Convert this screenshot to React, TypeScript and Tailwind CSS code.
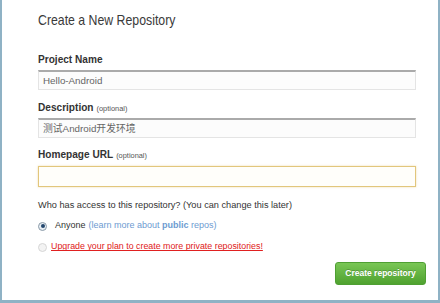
import React from 'react';

const sans = { fontFamily: '"Liberation Sans", Arial, "Noto Sans CJK SC", sans-serif' };

const Field = ({ label, optional, value, focused, top }: { label: string; optional?: boolean; value?: string; focused?: boolean; top: string }) => (
    <div className={top}>
        <div className="h-[14px] leading-[14px] text-[10.1px] font-bold text-[#333]">
            {label}
            {optional && <span className="ml-[3px] text-[7.4px] font-normal text-[#555]">(optional)</span>}
        </div>
        <div
            className={
                focused
                    ? 'mt-[4px] h-[21px] w-[378px] border-[1.5px] border-[#e2c67c] bg-[#fffefa] shadow-[0_0_2px_rgba(226,198,124,0.6)]'
                    : 'mt-[3px] h-[20px] w-[378px] border border-[#e4e4e4] border-t-2 border-t-[#aaaaaa] bg-[#fcfcfc]'
            }
        >
            {value && <div className="pl-[4px] leading-[17px] text-[9.8px] text-[#666]">{value}</div>}
        </div>
    </div>
);

export default function App() {
    return (
        <div style={sans} className="w-[440px] h-[303px] bg-white border-l-2 border-r-2 border-b-[3px] border-[#8fb2c5] overflow-hidden">
            <div className="pl-[36px]">
                <div className="pt-[10px] h-[30px] leading-[20px]">
                    <span className="inline-block origin-left scale-x-[0.82] text-[15px] text-[#3a3a3a] whitespace-nowrap">
                        Create a New Repository
                    </span>
                </div>

                <Field top="mt-[23px]" label="Project Name" value="Hello-Android" />
                <Field top="mt-[11px]" label="Description" optional value="测试Android开发环境" />
                <Field top="mt-[10px]" label="Homepage URL" optional focused />

                <div className="mt-[12px] h-[12px] leading-[12px] text-[9.2px] text-[#333] whitespace-nowrap">
                    Who has access to this repository? (You can change this later)
                </div>

                <div className="mt-[9px] h-[12px] flex items-center text-[9px] whitespace-nowrap">
                    <div className="w-[9px] h-[9px] rounded-full border border-[#8a9aa8] bg-[#e8eef3] flex items-center justify-center">
                        <div className="w-[4px] h-[4px] rounded-full bg-[#24476e]" />
                    </div>
                    <span className="ml-[8px] text-[#333]">Anyone</span>
                    <span className="ml-[3px] text-[#6d9bd1]">
                        (learn more about <b>public</b> repos)
                    </span>
                </div>

                <div className="mt-[9px] h-[12px] flex items-center text-[8.85px] whitespace-nowrap">
                    <div className="w-[9px] h-[9px] rounded-full border border-[#d6d6d6] bg-[#f3f3f3]" />
                    <span className="ml-[4px] text-[#e02020] underline">
                        Upgrade your plan to create more private repositories!
                    </span>
                </div>
            </div>

            <div className="mt-[9px] flex justify-end pr-[12px]">
                <div className="w-[91px] h-[23px] rounded-[3px] border border-[#4f9f33] bg-gradient-to-b from-[#79c655] to-[#4fa22f] flex items-center justify-center text-[8.5px] font-bold text-white [text-shadow:0_-1px_0_rgba(0,0,0,0.2)]">
                    Create repository
                </div>
            </div>
        </div>
    );
}
